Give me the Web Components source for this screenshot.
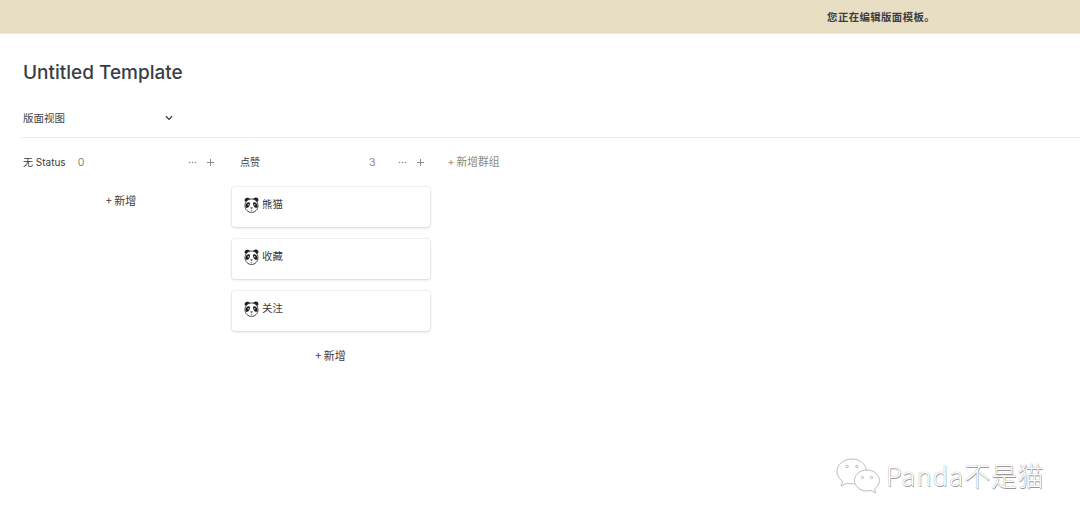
<!DOCTYPE html>
<html lang="zh">
<head>
<meta charset="utf-8">
<title>Untitled Template</title>
<style>
  html, body { margin: 0; height: 100%; background: #fff; overflow: hidden; }
  body { font-family: "Inter", "Noto Sans CJK SC", sans-serif; color: #37352f; }
</style>
</head>
<body>
<template-banner>您正在编辑版面模板。</template-banner>
<board-page heading="Untitled Template" view="版面视图">
  <board-column name="无 Status" count="0" wide-gap>
  </board-column>
  <board-column name="点赞" count="3">
    <board-card>熊猫</board-card>
    <board-card>收藏</board-card>
    <board-card>关注</board-card>
  </board-column>
  <add-group>+ 新增群组</add-group>
</board-page>
<wechat-mark>Panda不是猫</wechat-mark>

<script>
const CJK = '"Noto Sans CJK SC", sans-serif';

class TemplateBanner extends HTMLElement {
  constructor() {
    super();
    this.attachShadow({ mode: 'open' });
    this.shadowRoot.innerHTML = `
      <style>
        :host {
          display: flex;
          justify-content: flex-end;
          align-items: center;
          box-sizing: border-box;
          height: 34px;
          padding-right: 145px;
          background: #e8dec4;
          border-bottom: 1px solid #eee8d8;
          color: #3d3d40;
          font: 600 10.4px ${CJK};
          letter-spacing: .4px;
        }
      </style>
      <slot></slot>
    `;
  }
}

class BoardPage extends HTMLElement {
  constructor() {
    super();
    this.attachShadow({ mode: 'open' });
  }
  connectedCallback() {
    this.shadowRoot.innerHTML = `
      <style>
        :host { display: block; padding-left: 23px; }
        h1 {
          margin: 0;
          padding-top: 27px;
          height: 33px;
          font: 500 19px/24px "Inter", sans-serif;
          color: #3a3d42;
        }
        .view {
          display: flex;
          align-items: center;
          height: 20px;
          margin-top: 14px;
          font: 400 10.5px/20px ${CJK};
          color: #45454a;
        }
        .view span { width: 142px; }
        .view svg { width: 8px; height: 6px; }
        hr {
          margin: 9px 0 0 -2px;
          border: 0;
          border-top: 1px solid #ececec;
        }
        .columns { display: flex; align-items: flex-start; padding-top: 13px; }
      </style>
      <h1>${this.getAttribute('heading')}</h1>
      <div class="view">
        <span>${this.getAttribute('view')}</span>
        <svg viewBox="0 0 8 6"><path d="M1 1.2 4 4.4 7 1.2" fill="none" stroke="#3a3a3f" stroke-width="1.3"/></svg>
      </div>
      <hr>
      <div class="columns"><slot></slot></div>
    `;
  }
}

class BoardColumn extends HTMLElement {
  constructor() {
    super();
    this.attachShadow({ mode: 'open' });
  }
  connectedCallback() {
    const hasCards = this.children.length > 0;
    this.shadowRoot.innerHTML = `
      <style>
        :host { display: block; width: 193px; margin-right: 23px; }
        :host([wide-gap]) { margin-right: 0; width: 209px; }
        header {
          display: flex;
          align-items: center;
          height: 22px;
          font: 400 10px/22px "Inter", ${CJK};
          color: #3c3c40;
        }
        .name { white-space: nowrap; }
        .count { color: #85847f; font-size: 10.5px; padding-top: 1px; }
        .tools { margin-left: auto; display: flex; align-items: center; gap: 9px; }
        .tools svg { display: block; width: 9px; height: 9px; }
        .cards { display: flex; flex-direction: column; gap: 12px; padding-top: 14px; }
        .add {
          text-align: center;
          font: 400 11px/16px ${CJK};
          color: #3c3c40;
        }
      </style>
      <header>
        <span class="name">${this.getAttribute('name')}</span>
        <span class="count">${this.getAttribute('count')}</span>
        <span class="tools">
          <svg viewBox="0 0 9 9"><g fill="#8d8c88"><circle cx="1.5" cy="4.5" r=".8"/><circle cx="4.5" cy="4.5" r=".8"/><circle cx="7.5" cy="4.5" r=".8"/></g></svg>
          <svg viewBox="0 0 9 9"><path d="M4.5 1v7M1 4.5h7" stroke="#8d8c88" fill="none"/></svg>
        </span>
      </header>
      <div class="cards"><slot></slot></div>
      <div class="add">+ 新增</div>
    `;
    const name = this.shadowRoot.querySelector('.name');
    const count = this.shadowRoot.querySelector('.count');
    const tools = this.shadowRoot.querySelector('.tools');
    const add = this.shadowRoot.querySelector('.add');
    if (hasCards) {
      name.style.paddingLeft = '8px';
      count.style.marginLeft = '109px';
      add.style.marginTop = '16px';
      add.style.width = '197px';
    } else {
      count.style.marginLeft = '12px';
      tools.style.paddingRight = '17px';
      add.style.marginTop = '8px';
      add.style.paddingRight = '13px';
      this.shadowRoot.querySelector('.cards').style.paddingTop = '11px';
    }
  }
}

class BoardCard extends HTMLElement {
  constructor() {
    super();
    this.attachShadow({ mode: 'open' });
    this.shadowRoot.innerHTML = `
      <style>
        :host {
          display: flex;
          align-items: flex-start;
          gap: 3px;
          box-sizing: border-box;
          width: 198px;
          height: 40px;
          padding: 8px 12px;
          background: #fff;
          border-radius: 3px;
          box-shadow: 0 0 0 1px rgba(15,15,15,.05), 0 1px 3px rgba(15,15,15,.12);
          font: 400 10.4px/18px ${CJK};
          color: #3a3a48;
        }
        svg { flex: none; width: 15px; height: 16px; margin-top: 2px; }
      </style>
      <svg viewBox="0 0 30 32">
        <path d="M2 9C-.5 5 3 .5 8 1.500c2 .4 3.500 1.500 4 3h6c.5-1.500 2-2.600 4-3C27-.5 30.500 5 28 9Z" fill="#1d1d1f"/>
        <path d="M15 4C7 4 2 10 2 17.500 2 25 8 31 15 31s13-6 13-13.500C28 10 23 4 15 4Z" fill="#fff" stroke="#333" stroke-width="1.800"/>
        <path d="M3 17c1-5 5-8 8-6 2.500 2-.5 8.500-3 10-2.500 1.500-5.500.5-5-4ZM27 17c-1-5-5-8-8-6-2.500 2 .5 8.500 3 10 2.500 1.500 5.500.5 5-4Z" fill="#1d1d1f"/>
        <circle cx="8.500" cy="15.500" r="1.300" fill="#eee"/>
        <circle cx="21.500" cy="15.500" r="1.300" fill="#eee"/>
        <path d="M12 21h6l-3 3Z" fill="#222"/>
        <path d="M13 25.500h4c0 3-1 3.800-2 3.800s-2-.8-2-3.800Z" fill="#e58f94"/>
      </svg>
      <slot></slot>
    `;
  }
}

class AddGroup extends HTMLElement {
  constructor() {
    super();
    this.attachShadow({ mode: 'open' });
    this.shadowRoot.innerHTML = `
      <style>
        :host {
          display: block;
          font: 400 10.8px/21px ${CJK};
          color: #8a8984;
          white-space: nowrap;
        }
      </style>
      <slot></slot>
    `;
  }
}

class WechatMark extends HTMLElement {
  constructor() {
    super();
    this.attachShadow({ mode: 'open' });
    this.shadowRoot.innerHTML = `
      <style>
        :host {
          position: absolute;
          left: 836px;
          top: 453px;
          display: flex;
          align-items: center;
          gap: 5px;
          font: 300 26px/44px "Noto Sans CJK SC", "Noto Sans", sans-serif;
          letter-spacing: .8px;
          color: #fff;
          text-shadow: 0 0 1px #8f8f8f, .5px .5px .5px #9a9a9a;
        }
        span { padding-bottom: 4px; }
        svg { display: block; width: 45px; height: 38px; }
      </style>
      <svg viewBox="0 0 45 38" fill="#fff" stroke="#b4b4b4" stroke-width=".9">
        <path d="M16 1C7.500 1 1 6.600 1 13.500c0 4 2.200 7.500 5.700 9.800L5 28l5.800-2.800c1.700.5 3.400.7 5.200.7 7.500 0 14-5 14.500-12.400C30 6.600 24.500 1 16 1Z"/>
        <path d="M31 12c-7 0-12.500 4.700-12.500 10.500S24 33 31 33c1.400 0 2.800-.2 4-.6l4.800 2.600-1.300-4.200c3-2 4.900-5 4.900-8.300C43.400 16.700 38 12 31 12Z"/>
        <circle cx="11" cy="8.500" r="1.300" fill="none"/><circle cx="21" cy="8.500" r="1.300" fill="none"/>
        <circle cx="26.500" cy="19.500" r="1.200" fill="none"/><circle cx="35.500" cy="19.500" r="1.200" fill="none"/>
      </svg>
      <span><slot></slot></span>
    `;
  }
}

customElements.define('template-banner', TemplateBanner);
customElements.define('board-page', BoardPage);
customElements.define('board-column', BoardColumn);
customElements.define('board-card', BoardCard);
customElements.define('add-group', AddGroup);
customElements.define('wechat-mark', WechatMark);
</script>
</body>
</html>
